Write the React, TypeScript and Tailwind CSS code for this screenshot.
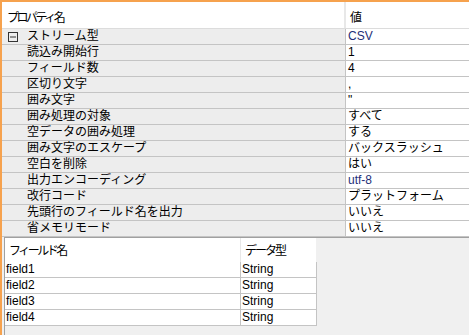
import React from "react";

const rows: { name: string; value: string; blue?: boolean }[] = [
  { name: "読込み開始行", value: "1" },
  { name: "フィールド数", value: "4" },
  { name: "区切り文字", value: "," },
  { name: "囲み文字", value: "\"" },
  { name: "囲み処理の対象", value: "すべて" },
  { name: "空データの囲み処理", value: "する" },
  { name: "囲み文字のエスケープ", value: "バックスラッシュ" },
  { name: "空白を削除", value: "はい" },
  { name: "出力エンコーディング", value: "utf-8", blue: true },
  { name: "改行コード", value: "プラットフォーム" },
  { name: "先頭行のフィールド名を出力", value: "いいえ" },
  { name: "省メモリモード", value: "いいえ" },
];

const fields = ["field1", "field2", "field3", "field4"];

export default function App() {
  return (
    <div
      className="w-[469px] h-[335px] overflow-hidden bg-[#f0f0f0] border-t-2 border-l-2 border-[#f6a24e] flex flex-col text-[12px] leading-[15px] text-black"
      style={{ fontFamily: '"Liberation Sans", "Noto Sans CJK JP", sans-serif' }}
    >
      {/* Property grid */}
      <div className="flex flex-col bg-white">
        <div className="flex h-[27px] border-b border-[#dcdcdc] bg-white">
          <div className="w-[342px] pl-[5px] pt-[9px] tracking-[-2.5px]">プロパティ名</div>
          <div className="w-[2px] bg-[#e8e8e8]" />
          <div className="flex-1 pl-[4px] pt-[9px]">値</div>
        </div>
        <div className="flex h-[16px] border-b border-[#c4c4c4]">
          <div className="w-[344px] bg-[#ededed] border-r border-[#c4c4c4] flex items-center pl-[6px]">
            <svg width="10" height="10" viewBox="0 0 10 10" className="shrink-0">
              <rect x="0.5" y="0.5" width="9" height="9" fill="none" stroke="#333" strokeWidth="1" />
              <line x1="2" y1="5" x2="8" y2="5" stroke="#333" strokeWidth="1" />
            </svg>
            <span className="ml-[9px]">ストリーム型</span>
          </div>
          <div className="flex-1 pl-[2px] text-[#1e2f78]">CSV</div>
        </div>
        {rows.map((r) => (
          <div key={r.name} className="flex h-[16px] border-b border-[#c4c4c4]">
            <div className="w-[344px] bg-[#ededed] border-r border-[#c4c4c4] pl-[25px] whitespace-nowrap">
              {r.name}
            </div>
            <div className={r.blue ? "flex-1 pl-[2px] whitespace-nowrap text-[#1e2f78]" : "flex-1 pl-[2px] whitespace-nowrap"}>
              {r.value}
            </div>
          </div>
        ))}
      </div>

      {/* Bottom field table */}
      <div className="flex-1 bg-[#f0f0f0] pl-[2px] flex">
        <div className="flex-1 border-t border-l border-[#a0a0a0] flex flex-col">
          <div className="flex h-[24px]">
            <div className="w-[235px] bg-white pl-[4px] pt-[6px] tracking-[-2.5px]">フィールド名</div>
            <div className="w-[1px] bg-[#e8e8e8]" />
            <div className="w-[75px] bg-white pl-[4px] pt-[6px] tracking-[-2px]">データ型</div>
          </div>
          {fields.map((f) => (
            <div key={f} className="flex h-[16px]">
              <div className="w-[236px] bg-white border-r border-b border-[#c4c4c4] pl-[1px]">{f}</div>
              <div className="w-[76px] bg-white border-r border-b border-[#c4c4c4] pl-[1px]">String</div>
            </div>
          ))}
        </div>
      </div>
    </div>
  );
}
